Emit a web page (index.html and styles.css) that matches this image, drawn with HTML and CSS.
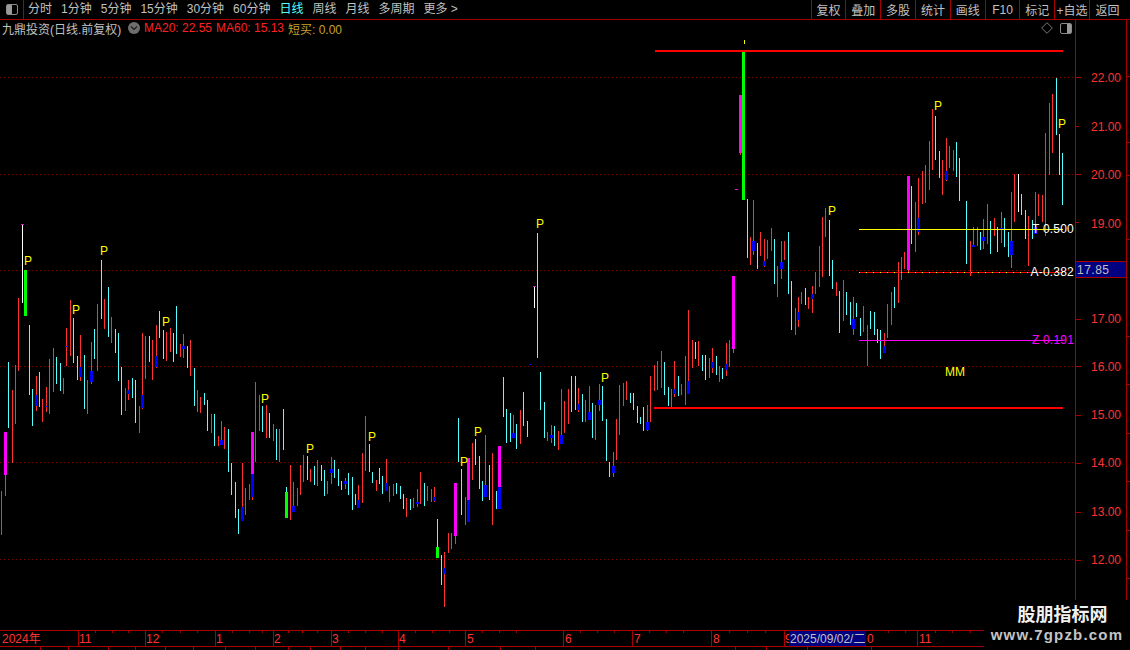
FILE: index.html
```html
<!DOCTYPE html>
<html lang="zh">
<head>
<meta charset="utf-8">
<title>九鼎投资 日线</title>
<link rel="stylesheet" href="styles.css">
</head>
<body>
<div class="app">
  <header class="topbar">
    <div class="panel-toggle"><span class="panel-icon"></span></div>
    <nav class="tabs">
      <span>分时</span><span>1分钟</span><span>5分钟</span><span>15分钟</span><span>30分钟</span><span>60分钟</span>
      <span class="active">日线</span><span>周线</span><span>月线</span><span>多周期</span><span>更多 &gt;</span>
    </nav>
    <nav class="tools">
      <span>复权</span><span>叠加</span><span>多股</span><span>统计</span><span>画线</span><span>F10</span><span>标记</span><span>+自选</span><span>返回</span>
    </nav>
  </header>
  <main class="main">
    <section class="plot">
      <div class="legend">
        <span class="stock">九鼎投资(日线.前复权)</span>
        <svg class="chev" viewBox="0 0 12 12"><circle cx="6" cy="6" r="6" fill="#6e6e6e"/><path d="M3 4.5L6 7.5L9 4.5" fill="none" stroke="#1c1c1c" stroke-width="1.2"/></svg>
        <span class="ma">MA20: 22.55</span>
        <span class="ma">MA60: 15.13</span>
        <span class="buy">短买: 0.00</span>
        <svg class="diamond" viewBox="0 0 12 12"><path d="M6 .7L11.3 6L6 11.3L.7 6Z" fill="none" stroke="#777"/></svg>
        <span class="panel-icon small"></span>
      </div>
      <svg class="chart" viewBox="0 38 1075 592" width="1075" height="592">
        <g class="grid"><path d="M0 77.5H1075M0 174.5H1075M0 270.5H1075M0 366.5H1075M0 462.5H1075M0 559.5H1075"/></g>
        <g class="bars" transform="translate(.5 0)">
          <path class="red" d="M1 491V535M5 475V496M12 390V463M15 365V424M18 298V371M36 376V411M42 399V422M46 387V412M49 359V414M53 348V392M63 378V394M66 328V366M70 300V356M80 335V381M87 380V414M91 342V384M97 304V371M104 299V329M111 317V343M125 388V411M128 380V400M139 406V433M142 333V409M145 336V379M152 340V380M156 325V368M166 332V361M170 328V352M180 344V357M183 334V358M190 340V376M197 390V412M200 397V413M211 414V433M218 436V446M221 421V443M224 427V449M242 463V521M245 488V515M249 484V500M252 497V500M255 382V462M259 395V431M266 405V438M273 424V441M279 429V462M290 465V520M293 482V512M297 488V506M300 465V495M303 455V482M310 469V482M317 460V486M327 481V494M331 457V484M345 478V489M358 485V508M362 453V503M365 416V471M376 480V491M386 459V491M389 486V502M393 484V496M406 498V517M413 498V508M417 489V507M420 472V504M427 486V501M431 489V502M434 487V502M444 552V607M448 533V553M451 533V549M455 536V544M465 497V525M472 443V480M485 435V485M492 453V525M513 415V438M520 410V444M547 432V441M551 425V443M558 431V450M561 389V444M564 401V433M568 389V424M578 388V412M585 400V422M589 386V420M595 405V440M599 384V411M613 452V477M616 419V460M619 385V435M623 383V406M626 381V400M647 405V431M650 376V422M654 365V391M657 361V390M661 351V388M671 389V407M674 361V397M681 384V395M685 356V405M688 310V394M692 340V368M698 341V366M709 358V378M712 348V373M719 366V382M726 343V376M729 340V367M733 349V353M740 153V155M750 237V265M753 200V255M760 232V256M764 239V267M767 240V259M771 228V251M777 266V297M781 241V279M784 241V260M795 308V335M798 297V327M801 292V304M808 297V309M812 286V313M815 272V294M819 246V287M822 217V277M825 208V237M836 282V296M843 280V321M853 297V335M863 306V332M867 325V366M884 333V348M887 304V338M891 292V325M898 262V303M901 257V280M904 252V269M908 270V273M915 202V252M918 178V235M922 171V204M925 165V203M929 141V190M932 109V170M942 160V195M946 138V181M949 146V168M953 150V171M970 241V276M973 227V247M977 227V246M983 219V249M987 204V244M994 218V236M1001 212V243M1011 192V268M1014 174V222M1028 216V266M1035 192V234M1038 194V216M1042 195V222M1045 133V236M1049 103V175M1052 94V153"/>
          <path class="cyan" d="M8 362V428M29 325V395M32 389V426M39 372V407M56 357V384M60 363V391M73 318V363M77 356V380M84 355V409M94 329V359M101 260V319M108 287V337M115 329V353M118 333V381M121 367V415M132 378V398M135 380V423M149 336V362M159 311V338M163 330V359M173 333V362M176 306V354M187 346V368M194 368V406M204 393V405M207 400V431M214 414V446M228 429V472M231 463V495M235 482V518M238 509V534M262 406V432M269 413V438M276 429V460M283 409V450M286 487V492M307 456V480M314 466V485M321 465V481M324 470V496M334 460V478M338 469V486M341 481V490M348 473V495M352 477V510M355 494V505M369 444V472M372 472V483M379 468V484M382 476V494M396 483V494M400 486V499M403 494V509M410 499V510M424 483V506M437 519V547M441 555V585M458 418V462M461 469V515M475 439V465M479 456V489M482 481V501M489 465V500M496 491V509M503 377V417M506 409V443M510 413V442M516 424V449M523 392V426M527 421V437M537 233V358M540 372V410M544 402V438M554 426V446M571 376V412M575 376V410M582 394V422M592 403V438M602 386V421M606 419V461M609 462V477M630 393V403M633 393V410M637 406V423M640 417V424M643 407V431M664 362V395M668 387V406M678 376V396M695 342V359M702 355V371M705 355V380M716 356V375M722 368V379M747 199V258M757 243V269M774 239V284M788 232V294M791 281V330M805 288V305M829 220V276M832 260V289M839 291V333M846 292V315M850 302V325M856 303V317M860 318V336M870 311V329M874 312V335M877 329V343M880 330V359M894 287V308M911 186V244M935 116V160M939 151V178M956 142V177M959 158V201M966 201V264M980 232V250M990 221V254M997 227V252M1004 218V247M1008 232V257M1021 194V215M1025 210V239M1032 220V239M1056 78V135M1059 134V175M1062 153V205"/>
          <path class="white" d="M22 225V303M534 287V308M1018 174V212"/>
          <path class="tick" d="M744 40V44"/>
          <path class="blue" d="M36 395V406M46 406V407M66 346V347M80 367V377M91 371V382M128 390V394M142 395V408M156 356V367M183 346V349M221 440V445M242 507V521M252 474V497M293 506V512M331 469V473M345 481V484M358 500V508M386 483V491M417 502V504M434 497V501M444 568V574M468 500V522M485 485V497M499 487V509M513 433V438M530 364V365M551 435V438M561 435V444M578 404V410M589 412V420M599 400V405M613 466V473M647 422V430M674 389V394M688 381V394M712 362V368M726 364V370M753 241V251M764 261V266M781 262V269M798 312V320M812 294V299M853 319V329M884 346V353M918 218V232M946 171V180M973 245V247M983 237V241M1001 228V229M1011 241V255M1035 227V234"/>
          <path class="magenta" d="M5 432V475M252 432V474M455 483V536M468 458V500M499 446V487M733 276V349M740 95V153M908 176V270M22 224V225M534 286V287M736 189V190"/>
          <path class="green" d="M25 270V316M286 492V518M437 547V558M743 52V200"/>
        </g>
        <g class="levels">
          <path class="lv-red" d="M655 50.5H1063M654 408H1063"/>
          <path class="lv-yellow" d="M859 229.5H1063"/>
          <path class="lv-a" d="M859 272.5H1063"/>
          <path class="lv-a-dots" d="M859 272.5H1063"/>
          <path class="lv-mag" d="M859 340.5H1063"/>
        </g>
        <g class="marks">
          <text x="24" y="265">P</text><text x="72" y="314">P</text><text x="100" y="255">P</text><text x="162" y="326">P</text>
          <text x="261" y="403">P</text><text x="306" y="453">P</text><text x="368" y="441">P</text><text x="460" y="466">P</text>
          <text x="474" y="436">P</text><text x="536" y="228">P</text><text x="601" y="382">P</text><text x="828" y="215">P</text>
          <text x="934" y="110">P</text><text x="1058" y="128">P</text>
          <text x="945" y="376">MM</text>
        </g>
        <g class="level-text">
          <text x="1074" y="233">T 0.500</text>
          <text x="1074" y="276">A-0.382</text>
          <text class="mag" x="1074" y="344">Z 0.191</text>
        </g>
      </svg>
    </section>
    <svg class="axis" viewBox="1075 20 55 610" width="55" height="610">
      <path class="ax-line" d="M1075.5 20V630M1126.5 20V630M1126 76.5H1130M1126 142.5H1130M1126 175.5H1130M1126 239.5H1130M1126 336.5H1130M1126 384.5H1130M1126 433.5H1130M1126 481.5H1130M1126 530.5H1130M1126 578.5H1130"/>
      <path class="ax-tick" d="M1075 77.5H1081M1075 126.5H1079M1075 174.5H1081M1075 222.5H1079M1075 319.5H1081M1075 366.5H1081M1075 415.5H1081M1075 463.5H1081M1075 512.5H1081M1075 560.5H1081"/>
      <g class="ax-text">
        <text x="1091" y="82">22.00</text><text x="1091" y="131">21.00</text><text x="1091" y="179">20.00</text><text x="1091" y="228">19.00</text>
        <text x="1091" y="323">17.00</text><text x="1091" y="371">16.00</text><text x="1091" y="419">15.00</text><text x="1091" y="467">14.00</text>
        <text x="1091" y="516">13.00</text><text x="1091" y="564">12.00</text>
      </g>
      <rect class="price-box" x="1075.5" y="261.5" width="51" height="16"/>
      <text class="price-text" x="1077" y="274">17.85</text>
    </svg>
  </main>
  <svg class="timeline" viewBox="0 630 1130 20" width="1130" height="20">
    <path class="tl-line" d="M0 630.5H1130M0 646.5H1130M78.5 630V646M145.5 630V646M215.5 630V646M273.5 630V646M331.5 630V646M398.5 630V646M465.5 630V646M563.5 630V646M632.5 630V646M711.5 630V646M784.5 630V646M917.5 630V646M40.5 646V650M68.5 646V650M108.5 646V650M135.5 646V650M165.5 646V650M193.5 646V650M225.5 646V650M255.5 646V650M288.5 646V650M310.5 646V650M340.5 646V650M365.5 646V650M398.5 646V650M448.5 646V650M500.5 646V650M535.5 646V650M735.5 646V650M766.5 646V650M807.5 646V650M871.5 646V650"/>
    <path class="tl-tick" d="M95 631V633M112 631V633M128 631V633M162 631V633M180 631V633M197 631V633M232 631V633M249 631V633M262 631V633M288 631V633M302 631V633M317 631V633M348 631V633M365 631V633M382 631V633M415 631V633M432 631V633M449 631V633M482 631V633M499 631V633M516 631V633M580 631V633M597 631V633M614 631V633M649 631V633M666 631V633M683 631V633M729 631V633M747 631V633M765 631V633M888 631V633M905 631V633M935 631V633M952 631V633M970 631V633"/>
    <g class="tl-text">
      <text x="2" y="643">2024年</text><text x="79" y="643">11</text><text x="146" y="643">12</text><text x="216" y="643">1</text>
      <text x="274" y="643">2</text><text x="332" y="643">3</text><text x="399" y="643">4</text><text x="467" y="643">5</text>
      <text x="565" y="643">6</text><text x="634" y="643">7</text><text x="713" y="643">8</text><text x="785" y="643">9</text>
      <text x="867" y="643">0</text><text x="919" y="643">11</text>
    </g>
    <rect class="date-box" x="789" y="631" width="77" height="15"/>
    <text class="date-text" x="790" y="643">2025/09/02/二</text>
  </svg>
  <aside class="watermark">
    <div class="wm-name">股朋指标网</div>
    <div class="wm-url">www.7gpzb.com</div>
  </aside>
</div>
</body>
</html>
```
FILE: styles.css
```css
* { box-sizing: border-box; }
html, body { margin: 0; padding: 0; background: #000; }
body { width: 1130px; height: 650px; overflow: hidden; font-family: "Liberation Sans", "Noto Sans CJK SC", sans-serif; font-size: 12px; color: #c0c0c0; }
svg { display: block; }
.app { position: relative; width: 1130px; height: 650px; display: flex; flex-direction: column; }

.topbar { height: 20px; display: flex; align-items: stretch; border-bottom: 1px solid #a80000; flex: none; }
.panel-toggle { width: 24px; border-right: 1px solid #a80000; display: flex; align-items: center; justify-content: center; }
.panel-icon { width: 12px; height: 11px; border: 1px solid #8a8a8a; border-radius: 2px; background: linear-gradient(90deg, #000 0 6px, #9a9a9a 6px 100%); display: block; }
.panel-toggle .panel-icon { background: linear-gradient(90deg, #9a9a9a 0 5px, #000 5px 100%); }
.tabs { display: flex; align-items: center; gap: 9px; padding-left: 4px; line-height: 19px; flex: 1; white-space: nowrap; }
.tabs .active { color: #54ffff; }
.tools { display: flex; align-items: stretch; white-space: nowrap; }
.tools span { width: 34.8px; border-left: 1px solid #a80000; display: flex; align-items: center; justify-content: center; }
.tools span:last-child { width: 41px; padding-right: 5px; }

.main { display: flex; flex: none; height: 610px; }
.plot { width: 1075px; flex: none; display: flex; flex-direction: column; }
.legend { height: 18px; display: flex; align-items: center; padding: 0 0 2px 2px; white-space: nowrap; flex: none; }
.stock { width: 126px; color: #c0c0c0; }
.chev { width: 12px; height: 12px; }
.ma { color: #ff2020; margin-left: 4px; width: 68px; }
.buy { color: #c8a028; margin-left: 4px; }
.diamond { width: 12px; height: 12px; margin-left: auto; }
.panel-icon.small { margin: 0 3px 0 7px; }
.chart { flex: none; }

.grid path { stroke: #800000; stroke-width: 1; stroke-dasharray: 1 3; fill: none; shape-rendering: crispEdges; }
.bars path { fill: none; shape-rendering: crispEdges; }
.red { stroke: #ff3232; stroke-width: 1; }
.cyan { stroke: #54ffff; stroke-width: 1; }
.white { stroke: #fff; stroke-width: 1; }
.tick { stroke: #ff0; stroke-width: 1; }
.blue { stroke: #0000ff; stroke-width: 3; }
.magenta { stroke: #ff00ff; stroke-width: 3; }
.green { stroke: #00ff00; stroke-width: 3; }
.levels path { fill: none; shape-rendering: crispEdges; }
.lv-red { stroke: #ff0000; stroke-width: 2; }
.lv-yellow { stroke: #ffff00; stroke-width: 1; }
.lv-a { stroke: #ff0000; stroke-width: 1; }
.lv-a-dots { stroke: #ffff00; stroke-width: 1; stroke-dasharray: 1 6; }
.lv-mag { stroke: #ff00ff; stroke-width: 1; }
.marks text { fill: #ffff00; font-size: 12px; font-family: "Liberation Sans", sans-serif; }
.level-text text { fill: #fff; font-size: 12px; text-anchor: end; letter-spacing: .2px; font-family: "Liberation Sans", sans-serif; }
.level-text .mag { fill: #ff00ff; }

.axis { flex: none; }
.ax-line, .ax-tick { stroke: #a80000; stroke-width: 1; fill: none; shape-rendering: crispEdges; }
.ax-text text { fill: #ff3232; font-size: 12px; }
.price-box { fill: #000080; stroke: #a80000; }
.price-text { fill: #c0c0c0; font-size: 12px; letter-spacing: .5px; }

.timeline { flex: none; }
.tl-line { stroke: #a80000; stroke-width: 1; fill: none; shape-rendering: crispEdges; }
.tl-tick { stroke: #a80000; stroke-width: 1; shape-rendering: crispEdges; }
.tl-text text { fill: #ff3232; font-size: 12px; }
.date-box { fill: #000080; }
.date-text { fill: #c0c0c0; font-size: 12px; }

.watermark { position: absolute; left: 984px; top: 600px; width: 146px; height: 50px; background: #000; text-align: center; }
.wm-name { font-family: "Noto Sans CJK SC", sans-serif; font-weight: 700; font-size: 18px; line-height: 24px; padding: 1px 0 0 11px; color: #f0f0f0; }
.wm-url { font-family: "Liberation Sans", sans-serif; font-weight: 700; font-size: 15px; line-height: 18px; letter-spacing: 1.2px; padding-top: 1px; color: #c4c4c4; }
```
